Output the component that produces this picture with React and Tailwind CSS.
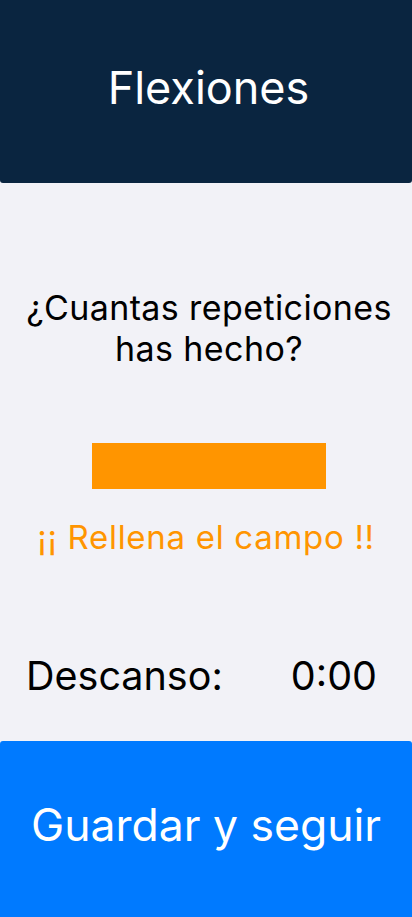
export default function App() {
  return (
    <div
      className="flex h-[917px] flex-col bg-[#f2f2f7]"
      style={{ fontFamily: "Inter, 'Noto Sans', sans-serif" }}
    >
      <header className="flex h-[183px] items-center justify-center rounded-b-[3px] bg-[#0a2540] pb-[8px]">
        <h1 className="ml-[5px] text-[45px] leading-none text-white">Flexiones</h1>
      </header>

      <main className="flex flex-1 flex-col items-center">
        <p className="mt-[104px] ml-[6px] text-center text-[34px] leading-[41px] tracking-[0.4px] text-black">
          ¿Cuantas repeticiones
          <br />
          has hecho?
        </p>

        <div className="mt-[74px] ml-[6px] h-[46px] w-[234px] bg-[#ff9500]" />

        <p className="mt-[32px] text-[33px] leading-none tracking-[0.7px] text-[#ff9500]">
          ¡¡ Rellena el campo !!
        </p>

        <div className="mt-auto mb-[45px] flex w-full justify-between pl-[26px] pr-[35px] text-[39.5px] leading-none text-black">
          <span>Descanso:</span>
          <span>0:00</span>
        </div>
      </main>

      <button className="h-[176px] w-full rounded-t-[3px] bg-[#007aff] pb-[7px] text-[44.5px] text-white">
        Guardar y seguir
      </button>
    </div>
  );
}
